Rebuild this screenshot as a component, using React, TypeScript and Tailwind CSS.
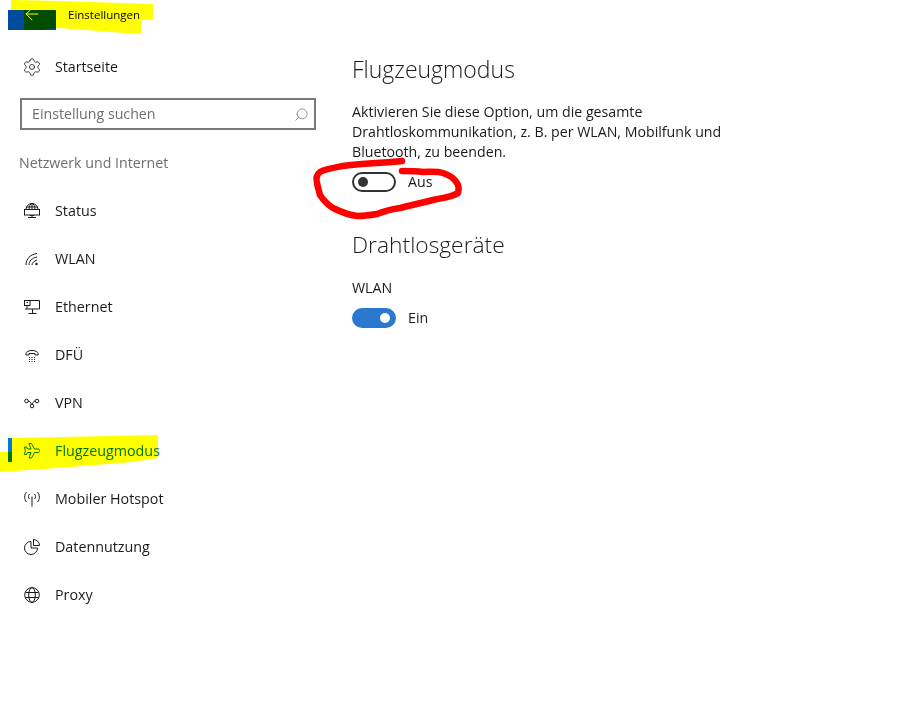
import { ArrowLeft, Search, Settings } from "lucide-react";

const font = { fontFamily: "'Open Sans', sans-serif" };

const icons: Record<string, React.ReactNode> = {
  Status: (
    <>
      <circle cx="8" cy="6.500" r="6" />
      <ellipse cx="8" cy="6.500" rx="3" ry="6" />
      <path d="M2 4h12M8 .5v6" />
      <rect x=".5" y="6.500" width="15" height="5.500" fill="#fff" />
      <path d="M4 14.500h8M8 12v2.500" />
    </>
  ),
  WLAN: (
    <>
      <path d="M2 14C2 8 6 3.500 13 2.500M5 14c0-4 3-7 8-8M8 14c0-2 2-4 5-5" />
      <circle cx="12.500" cy="13" r="1.200" fill="currentColor" stroke="none" />
    </>
  ),
  Ethernet: (
    <>
      <path d="M6 1.500h9.500v8.500H1" />
      <rect x=".5" y="1.500" width="5.500" height="5" />
      <path d="M3 6.500V10M8.500 10v4.500M4.500 14.500h8M2.500 3.500h1.500" />
    </>
  ),
  DFÜ: (
    <>
      <path d="M2 8V6.500c0-4 12-4 12 0V8h-3V6.500H5V8z" />
      <path d="M5 10.500h1M7.500 10.500h1M10 10.500h1M5 12.500h1M7.500 12.500h1M10 12.500h1M5 14.500h1M7.500 14.500h1M10 14.500h1" />
    </>
  ),
  VPN: (
    <>
      <circle cx="2.500" cy="6" r="1.800" />
      <circle cx="13" cy="6" r="1.800" />
      <circle cx="8" cy="11" r="1.800" />
      <path d="M4.300 6c2.500 0 2.500 3.200 3.700 3.200M11.200 6c-2.500 0-2 3.200-3.200 3.200" />
    </>
  ),
  Flugzeugmodus: (
    <path d="M5 .5h2.500L10.500 6h3.500c2.500 0 2.500 3.500 0 3.500h-3.500L7.500 15H5l2-5.500H3.500L2.500 11.500H.5l.8-3.700L.5 4h2l1 2H7z" />
  ),
  "Mobiler Hotspot": (
    <path d="M8 5.500v10M5.500 3c-1.500 2-1.500 3.500 0 5M10.500 3c1.500 2 1.500 3.500 0 5M2.500 1c-2.500 3.500-2.500 7 0 10M13.500 1c2.500 3.500 2.500 7 0 10" />
  ),
  Datennutzung: (
    <>
      <path d="M7 2.500a6.500 6.500 0 1 0 6.500 6.500H7z" />
      <path d="M9.500 .5a6 6 0 0 1 6 6h-6z" />
    </>
  ),
  Proxy: (
    <>
      <circle cx="8" cy="8" r="7.300" />
      <ellipse cx="8" cy="8" rx="3.300" ry="7.300" />
      <path d="M1.500 5.500h13M1.500 10.500h13" />
    </>
  ),
};

function NavItem({ label, active }: { label: string; active?: boolean }) {
  return (
    <div className={`flex h-12 items-center ${active ? "text-[#0078d7]" : "text-[#1a1a1a]"}`}>
      <div className={`-mt-[2px] h-6 w-1 ${active ? "bg-[#0078d7]" : ""}`} />
      <svg
        viewBox="0 0 16 16"
        fill="none"
        stroke="currentColor"
        strokeWidth="1"
        className="ml-3 h-4 w-4 shrink-0"
      >
        {icons[label]}
      </svg>
      <span className="ml-[15px] text-[14.3px]">{label}</span>
    </div>
  );
}

function Toggle({ on, label }: { on?: boolean; label: string }) {
  return (
    <div className="flex items-center gap-3">
      <div
        className={`flex h-5 w-11 items-center rounded-full border-2 px-[4px] ${on ? "justify-end border-[#2b78cf] bg-[#2b78cf]" : "justify-start border-[#333] bg-white"}`}
      >
        <div className={`h-2.5 w-2.5 rounded-full ${on ? "bg-white" : "bg-[#333]"}`} />
      </div>
      <span className="text-[14.2px] text-[#1a1a1a]">{label}</span>
    </div>
  );
}

export default function App() {
  return (
    <div className="relative h-[718px] w-[903px] overflow-hidden bg-white" style={font}>
      <div className="flex">
        <aside className="w-[352px] shrink-0">
          <div className="flex h-[43px] items-start pt-[10px]">
            <div className="ml-2 flex h-5 w-12 items-start justify-center bg-[#004c9c] text-white">
              <ArrowLeft className="-mt-[6px] h-5 w-5" strokeWidth={1.2} />
            </div>
            <span className="ml-3 mt-[-4px] text-[11.5px] text-black">Einstellungen</span>
          </div>
          <div className="flex h-12 items-center pl-[22px] text-[#1a1a1a]">
            <Settings className="h-5 w-5 shrink-0" strokeWidth={1} />
            <span className="ml-[13px] text-[14.2px]">Startseite</span>
          </div>
          <div className="ml-5 mt-[7px] flex h-8 w-[296px] items-center justify-between border-2 border-[#7a7a7a] pl-2.5 pr-[5px]">
            <span className="text-[14.2px] text-[#6e6e6e]">Einstellung suchen</span>
            <Search className="h-[15px] w-[15px] -scale-x-100 text-[#777]" strokeWidth={1.2} />
          </div>
          <div className="ml-[19px] mt-[22px] h-[35px] text-[14.2px] leading-[22px] text-[#6e6e6e]">
            Netzwerk und Internet
          </div>
          <nav className="ml-2">
            {Object.keys(icons).map((label) => (
              <NavItem key={label} label={label} active={label === "Flugzeugmodus"} />
            ))}
          </nav>
        </aside>
        <main className="pt-[52px]">
          <h1 className="text-[23px] font-light leading-[34px] text-[#1a1a1a]">Flugzeugmodus</h1>
          <p className="mt-[16px] w-[390px] text-[14.2px] leading-5 text-[#1a1a1a]">
            Aktivieren Sie diese Option, um die gesamte Drahtloskommunikation, z. B. per WLAN,
            Mobilfunk und Bluetooth, zu beenden.
          </p>
          <div className="mt-[9px]">
            <Toggle label="Aus" />
          </div>
          <h2 className="mt-[36px] text-[22.8px] font-light leading-[34px] text-[#1a1a1a]">
            Drahtlosgeräte
          </h2>
          <div className="mt-[16px] text-[14.2px] leading-5 text-[#1a1a1a]">WLAN</div>
          <div className="mt-[9px]">
            <Toggle on label="Ein" />
          </div>
        </main>
      </div>

      {/* Highlighter and pen marks drawn over the screenshot */}
      <svg
        viewBox="0 0 903 718"
        className="pointer-events-none absolute left-0 top-0 h-[718px] w-[903px] mix-blend-multiply"
      >
        <path
          fill="#ffff00"
          d="M11 0 L60 1 L153 4 L153 20 L142 20 L141 34 L110 32 L75 29 L56 28 L41 30 L24 30 L24 10 L11 10 Z"
        />
        <path
          fill="#ffff00"
          d="M12 438 L60 437 L110 436 L158 435 L158 458 L133 462 L57 468 L0 472 L0 452 L12 452 Z"
        />
      </svg>
      <svg viewBox="0 0 903 718" className="pointer-events-none absolute left-0 top-0 h-[718px] w-[903px]">
        <path
          d="M402 161 C380 163 360 164 343 166 C332 168 325 169 320 172 C316 175 316 179 317 183 C318 188 319 191 320 195 C324 201 328 205 333 208 C341 212 349 215 357 216 C364 216 371 215 377 214 C385 211 392 209 400 208 C411 205 422 203 433 200 C442 198 452 197 458 193 C459 189 459 186 457 183 C454 178 449 175 443 173 C436 171 430 172 423 172 C416 171 409 171 402 171"
          fill="none"
          stroke="#ff0000"
          strokeWidth="6.500"
          strokeLinecap="round"
          strokeLinejoin="round"
        />
      </svg>
    </div>
  );
}
